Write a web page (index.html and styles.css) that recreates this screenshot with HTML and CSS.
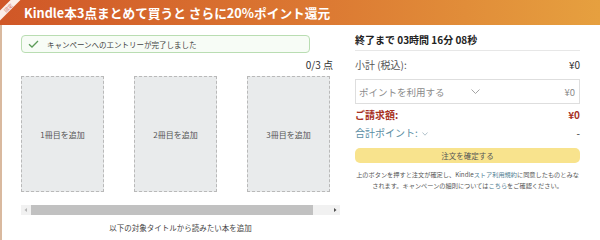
FILE: index.html
```html
<!DOCTYPE html>
<html lang="ja">
<head>
    <meta charset="UTF-8">
    <meta name="viewport" content="width=device-width, initial-scale=1.0">
    <title>Kindle まとめ買いキャンペーン</title>
    <link rel="stylesheet" href="styles.css">
</head>
<body>
    <div class="banner">
        <div class="ribbon"><span>限定</span></div>
        Kindle本3点まとめて買うと さらに20%ポイント還元
    </div>

    <div class="main">
        <div class="picker">
            <div class="entry">
                <svg class="check" width="11" height="8" viewBox="0 0 11 8">
                    <path d="M1 4.2 L4 7 L10 1" fill="none" stroke="#5b9b58" stroke-width="1.3"/>
                </svg>
                キャンペーンへのエントリーが完了しました
            </div>
            <div class="count">0/3 点</div>

            <div class="shelf">
                <div class="slot">1冊目を追加</div>
                <div class="slot">2冊目を追加</div>
                <div class="slot">3冊目を追加</div>
            </div>

            <div class="scrollbar">
                <svg width="10" height="10" viewBox="0 0 10 10"><path d="M6 3 L3.5 5 L6 7 Z" fill="#b5b5b5"/></svg>
                <div class="thumb"></div>
                <svg width="10" height="10" viewBox="0 0 10 10"><path d="M4 3 L6.5 5 L4 7 Z" fill="#505050"/></svg>
            </div>

            <div class="hint">以下の対象タイトルから読みたい本を追加</div>
        </div>

        <div class="summary">
            <div class="timer">終了まで 03時間 16分 08秒</div>

            <div class="row subtotal">
                <span>小計 (税込):</span>
                <span class="price">¥0</span>
            </div>

            <div class="select">
                <span>ポイントを利用する</span>
                <svg class="chev" width="9" height="5" viewBox="0 0 9 5"><path d="M0.5 0.5 L4.5 4.5 L8.5 0.5" fill="none" stroke="#9a9a9a" stroke-width="0.9"/></svg>
                <span class="select-price">¥0</span>
            </div>

            <div class="row total">
                <span>ご請求額:</span>
                <span>¥0</span>
            </div>

            <div class="row points">
                <span>合計ポイント: <svg width="6" height="4" viewBox="0 0 6 4"><path d="M0.5 0.5 L3 3.2 L5.5 0.5" fill="none" stroke="#9fb4bf" stroke-width="0.8"/></svg></span>
                <span class="dash">-</span>
            </div>

            <button class="confirm">注文を確定する</button>

            <p class="fine">上のボタンを押すと注文が確定し、Kindle<a href="#">ストア利用規約</a>に同意したものとみな<br>されます。キャンペーンの細則については<a href="#">こちら</a>をご確認ください。</p>
        </div>
    </div>
</body>
</html>
```

FILE: styles.css
```css
* {
    box-sizing: border-box;
    margin: 0;
    padding: 0;
}

body {
    font-family: "Noto Sans CJK JP", "Noto Sans", sans-serif;
    background-color: #fff;
    color: #333;
    width: 600px;
    height: 240px;
    overflow: hidden;
}

.banner {
    position: relative;
    height: 25px;
    padding-left: 24px;
    line-height: 25px;
    font-size: 12.7px;
    font-weight: bold;
    color: #fff;
    background: linear-gradient(90deg, #d05727 0%, #dc7a33 55%, #e6a03f 100%);
    overflow: hidden;
}

.ribbon {
    position: absolute;
    top: 4px;
    left: -8px;
    width: 32px;
    height: 7px;
    background-color: rgba(255, 255, 255, 0.9);
    transform: rotate(-45deg);
    text-align: center;
    line-height: 7px;
}

.ribbon span {
    display: block;
    font-size: 5px;
    color: #d27b6d;
    font-weight: normal;
}

.main {
    display: flex;
    height: 215px;
    border-left: 2px solid #d9b99f;
}

/* left side: book slots */
.picker {
    width: 338px;
    padding: 10px 0 0 19px;
}

.entry {
    display: flex;
    align-items: center;
    gap: 8px;
    width: 289px;
    height: 18px;
    padding-left: 6px;
    border: 1px solid #b9ddb2;
    border-radius: 4px;
    background-color: #f7fcf6;
    font-size: 7.5px;
    color: #444;
}

.count {
    margin-top: 6px;
    padding-right: 7px;
    text-align: right;
    font-size: 10px;
    line-height: 12px;
    color: #333;
}

.shelf {
    display: flex;
    gap: 30px;
    margin-top: 5px;
}

.slot {
    display: flex;
    align-items: center;
    justify-content: center;
    width: 83px;
    height: 116px;
    border: 1px dashed #b9b9b9;
    background-color: #e9ebec;
    font-size: 8px;
    color: #555;
}

.scrollbar {
    display: flex;
    align-items: center;
    height: 10px;
    margin-top: 13px;
    background-color: #f1f1f1;
}

.thumb {
    flex: 1;
    height: 10px;
    margin-right: 17px;
    background-color: #c1c1c1;
}

.hint {
    margin-top: 8px;
    text-align: center;
    font-size: 7.5px;
    line-height: 10px;
    color: #444;
}

/* right side: order summary */
.summary {
    width: 225px;
    margin-left: 15px;
}

.timer {
    padding-top: 9px;
    padding-bottom: 4px;
    border-bottom: 1px solid #e7e7e7;
    font-size: 10px;
    line-height: 12px;
    font-weight: bold;
    color: #222;
}

.row {
    display: flex;
    justify-content: space-between;
    font-size: 10px;
    line-height: 12px;
}

.subtotal {
    margin-top: 8px;
    color: #555;
}

.subtotal .price {
    color: #333;
}

.select {
    display: flex;
    align-items: center;
    height: 25px;
    margin-top: 8px;
    padding: 0 4px 0 3px;
    border: 1px solid #dedede;
    font-size: 9.5px;
    color: #8a8a8a;
}

.chev {
    margin-left: 26px;
}

.select-price {
    margin-left: auto;
}

.total {
    margin-top: 5px;
    font-weight: bold;
    color: #a8321f;
}

.points {
    margin-top: 6px;
    color: #5a8da3;
}

.points svg {
    margin-left: 2px;
    vertical-align: middle;
}

.dash {
    color: #333;
}

.confirm {
    display: block;
    width: 100%;
    height: 15px;
    margin-top: 9px;
    border: none;
    border-radius: 5px;
    background-color: #f8e38d;
    font-family: inherit;
    font-size: 7.5px;
    color: #555;
}

.fine {
    margin-top: 6px;
    text-align: center;
    font-size: 6.2px;
    line-height: 11px;
    color: #555;
    white-space: nowrap;
}

.fine a {
    color: #4f7d93;
    text-decoration: none;
}
```
